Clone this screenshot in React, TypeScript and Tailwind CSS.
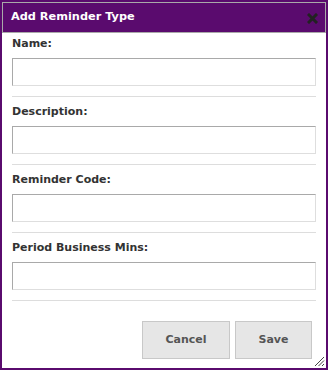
import React from 'react';

const fields = ['Name:', 'Description:', 'Reminder Code:', 'Period Business Mins:'];

const Field: React.FC<{ label: string; first?: boolean }> = ({ label, first }) => {
  return (
    <div className={first ? 'pt-[3px]' : 'pt-[7px]'}>
      <label className="block h-[16px] text-[11px] leading-[16px] font-bold text-[#333333]">{label}</label>
      <input
        type="text"
        className="mt-[6px] block h-[28px] w-full border border-t-[#a9a9a9] border-l-[#a9a9a9] border-r-[#dedede] border-b-[#dedede] bg-white outline-none"
      />
      <div className="mt-[10px] h-px bg-[#dddddd]" />
    </div>
  );
};

export default function App() {
  return (
    <div
      className="flex h-[370px] w-[328px] flex-col bg-[#5a0b6e] p-[2px]"
      style={{ fontFamily: '"DejaVu Sans", Verdana, sans-serif' }}
    >
      {/* Title bar */}
      <div className="flex h-[31px] items-center justify-between border border-[#a9a9a9] bg-[#5a0b6e] pl-[8px] pr-[7px]">
        <span className="text-[11.3px] font-bold text-white">Add Reminder Type</span>
        <svg width="11" height="11" viewBox="0 0 11 11" className="mt-[1px]">
          <path d="M2 2 9 9 M9 2 2 9" stroke="#222222" strokeWidth="3" strokeLinecap="square" />
        </svg>
      </div>

      {/* Body */}
      <div className="relative flex flex-1 flex-col bg-white px-[10px]">
        {fields.map((f, i) => (
          <Field key={f} label={f} first={i === 0} />
        ))}

        <div className="mt-[20px] flex justify-end gap-[5px] pr-[4px]">
          <button className="h-[38px] w-[88px] border border-[#c8c8c8] bg-[#e6e6e6] text-[11px] font-bold text-[#555555]">
            Cancel
          </button>
          <button className="h-[38px] w-[77px] border border-[#c8c8c8] bg-[#e6e6e6] text-[11px] font-bold text-[#555555]">
            Save
          </button>
        </div>

        {/* resize grip */}
        <svg width="11" height="11" viewBox="0 0 11 11" className="absolute bottom-[1px] right-[1px]">
          <path d="M10 1 1 10 M10 4.5 4.5 10 M10 8 8 10" stroke="#444444" strokeWidth="1" />
        </svg>
      </div>
    </div>
  );
}
